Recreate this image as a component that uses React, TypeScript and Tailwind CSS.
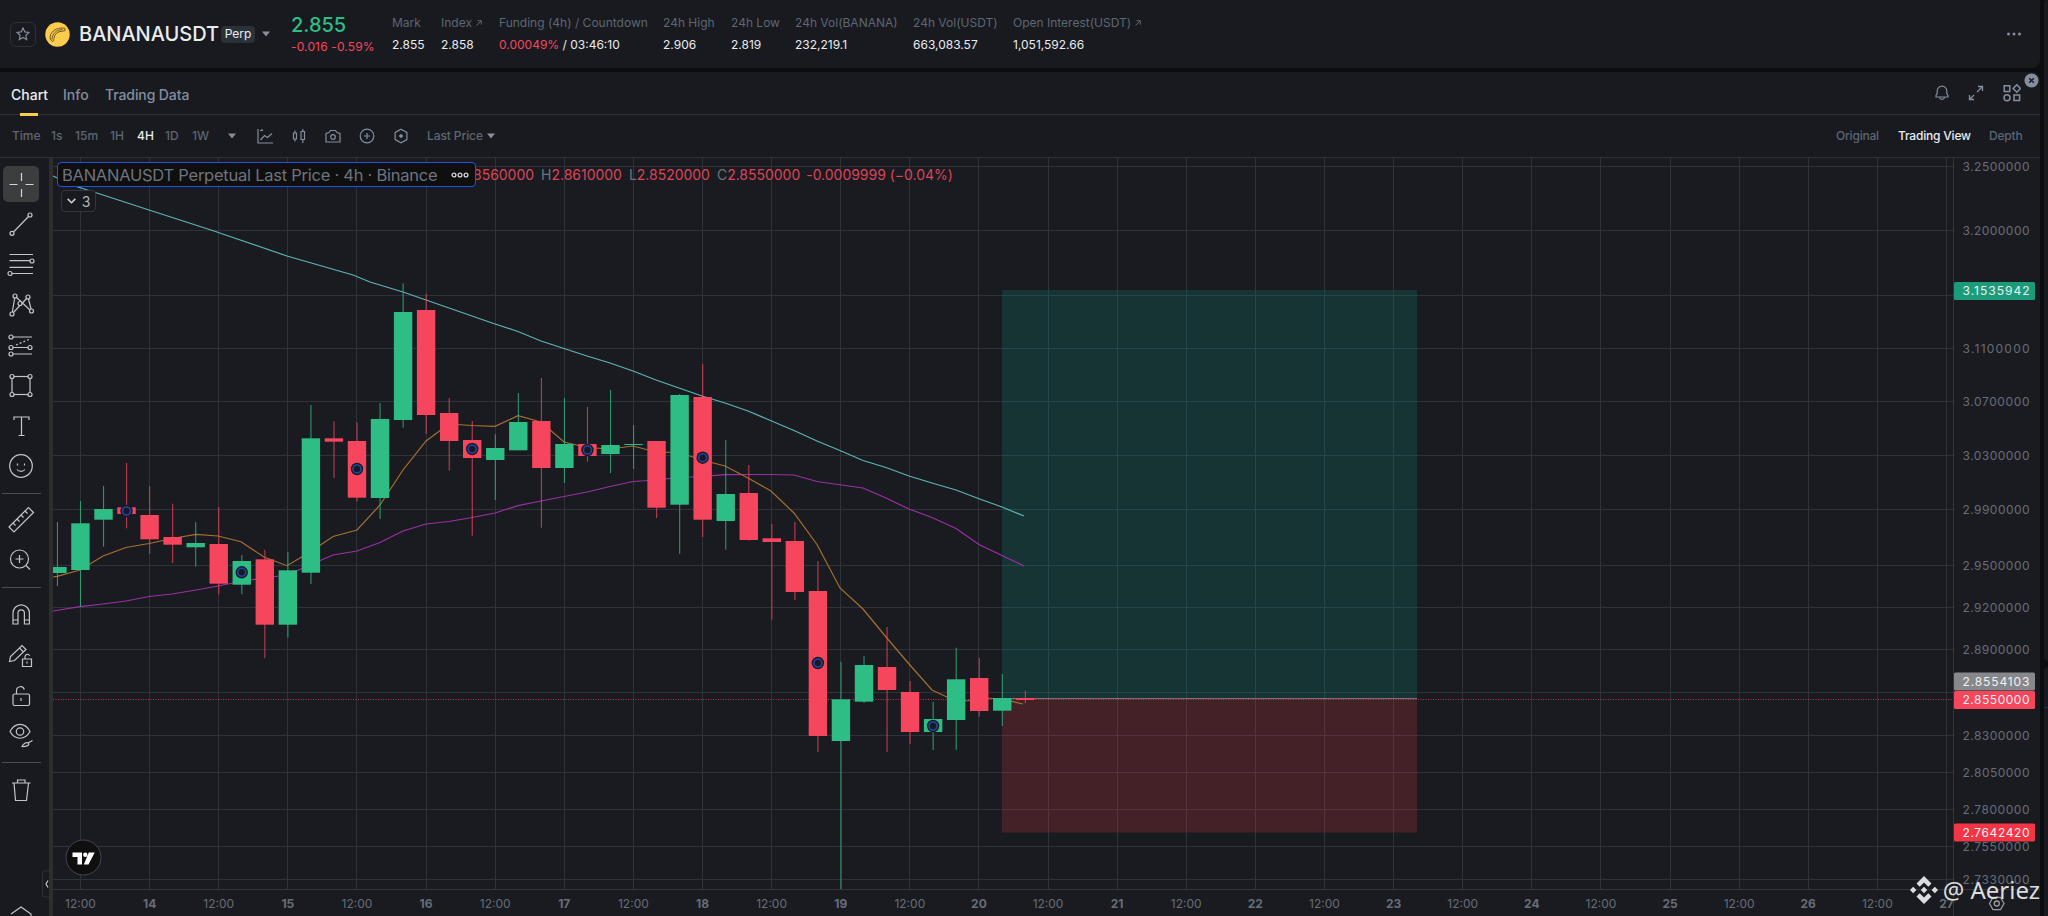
import clsx from "clsx";

type Candle = [number, number, number, number, 0 | 1];

// high, low, body top, body bottom, 1 = up
const candles: Candle[] = [
  [522, 586, 567, 573, 1],
  [501, 607, 523.3, 570, 1],
  [486, 546.7, 509, 519.7, 1],
  [463, 528.3, 507.3, 514, 0],
  [486, 553.7, 515, 539.3, 0],
  [503.7, 563, 537, 544.7, 0],
  [522, 566.7, 543, 547.3, 1],
  [507, 594.3, 544, 583.7, 0],
  [555, 594, 561, 584.7, 1],
  [550, 658, 559.3, 624.7, 0],
  [552, 637.7, 570.3, 624.7, 1],
  [405, 584, 438.3, 572.7, 1],
  [421.3, 478, 438.3, 441.7, 0],
  [422.3, 501.3, 441, 497.7, 0],
  [403.3, 519, 419, 498, 1],
  [283.3, 427.7, 312, 420, 1],
  [293.7, 434, 310, 415, 0],
  [398, 470.7, 413, 441, 0],
  [421, 535.7, 440, 458, 0],
  [434.3, 500, 448, 460, 1],
  [393, 450.3, 422, 450.3, 1],
  [378, 527.7, 421, 468, 0],
  [398, 483, 444, 468, 1],
  [407, 461.7, 444, 456, 0],
  [390, 473, 445, 454, 1],
  [425, 469, 444, 445, 1],
  [441, 518, 441, 507.7, 0],
  [394, 553.7, 395, 504.7, 1],
  [364, 537, 397, 519.7, 0],
  [440, 549.7, 494, 521, 1],
  [465, 540.7, 493, 540, 0],
  [524, 619.7, 538.3, 542, 0],
  [522, 600, 541, 592, 0],
  [561, 752, 591, 736, 0],
  [661.7, 889, 699.3, 741, 1],
  [656, 703, 665, 701.7, 1],
  [627, 752, 667, 690, 0],
  [681, 744, 692, 732, 0],
  [702, 750, 719, 732, 1],
  [647.7, 750, 679.3, 720, 1],
  [658, 716.7, 678, 711, 0],
  [674, 726, 698, 710.7, 1],
  [690.7, 703.3, 698, 700, 0],
];

// [candle index, y]
const markers = [
  [3, 511],
  [8, 572.3],
  [13, 469],
  [18, 449],
  [23, 450],
  [28, 457.7],
  [33, 663],
  [38, 726],
];

const maSlow =
  "53,176 78,187 103,195 149,210 211,230 287,256 353,275 370,282 403,292 426,300 472,316 495,324 518,331.5 541,341 564,348.5 587,356 610,363 633,371 656,380 679,388 702,396 725,403 748,411 771,420.7 794,430.5 817,441 840,450.5 863,460.5 886,467.5 909,476 932,483 956,490 979,498.7 1002,507 1024,516";
const maFast =
  "53,577 57,576.3 80,570 103,556 126,547.5 149,543.5 172,538.5 196,534.3 218,536 241,541.7 264,557 287,565.7 310,552 333,536.5 357,530 380,505 403,470 426,441 449,424 472,425.5 495,426.3 518,415.7 541,422 564,442 587,447.5 610,449 633,446 656,452 679,452.5 702,460 725,466 748,478 771,491 794,513 817,544.5 840,588 863,609 886,637 909,664 932,690 947,697 967,701 984,698 1002,699 1023,704";
const maMid =
  "53,611 80,606.7 103,604 126,601 149,596.5 172,594 196,590 218,586 241,581.5 264,578 287,575 310,565 333,555 357,551 380,542.5 403,531 426,524 449,521.5 472,517.5 495,513 518,505.7 541,501 564,496.5 587,492 610,486.5 633,481.5 656,480 679,477.5 702,476.5 725,474.7 748,474.5 771,474.5 794,475 817,481.5 863,488 886,498 909,509 932,517.5 956,528.5 979,544.5 1024,566";

const priceLevels: [number, string][] = [
  [166.5, "3.2500000"],
  [230.5, "3.2000000"],
  [295.5, ""],
  [348.5, "3.1100000"],
  [401.5, "3.0700000"],
  [455.5, "3.0300000"],
  [509.5, "2.9900000"],
  [565.5, "2.9500000"],
  [607.5, "2.9200000"],
  [649.5, "2.8900000"],
  [692.5, ""],
  [735.5, "2.8300000"],
  [772.5, "2.8050000"],
  [809.5, "2.7800000"],
  [846.5, "2.7550000"],
  [879.5, "2.7330000"],
];

const priceTags = [
  { y: 291, text: "3.1535942", fill: "#1a9c7b" },
  { y: 681.5, text: "2.8554103", fill: "#87888b" },
  { y: 700, text: "2.8550000", fill: "#f6465d" },
  { y: 832.5, text: "2.7642420", fill: "#f23645" },
];

const stats = [
  { label: "Mark", value: "2.855", width: "w-[49px]" },
  { label: "Index", value: "2.858", width: "w-[58px]", arrow: true },
  { label: "Funding (4h) / Countdown", value: "03:46:10", rate: "0.00049%", width: "w-[164px]" },
  { label: "24h High", value: "2.906", width: "w-[68px]" },
  { label: "24h Low", value: "2.819", width: "w-[64px]" },
  { label: "24h Vol(BANANA)", value: "232,219.1", width: "w-[118px]" },
  { label: "24h Vol(USDT)", value: "663,083.57", width: "w-[100px]" },
  { label: "Open Interest(USDT)", value: "1,051,592.66", width: "w-[140px]", arrow: true },
];

const candleX = (i: number) => 57.4 + i * 23.045;

const Caret = ({ className }: { className?: string }) => (
  <svg className={className} width="8" height="6" viewBox="0 0 8 6" fill="#848e9c">
    <path d="M0 0.5h8L4 5.5z" />
  </svg>
);

const OutArrow = () => (
  <svg width="6" height="6" viewBox="0 0 6 6" fill="none" stroke="#5e6673">
    <path d="M0.5 5.5L5 1M1.5 0.7H5.3V4.5" />
  </svg>
);

const SymbolHeader = () => (
  <header className="flex h-[68px] shrink-0 items-center rounded-br-lg bg-[#181a20] pl-[10px] pr-[18px]">
    <div className="flex h-[25px] w-[26px] shrink-0 items-center justify-center rounded-md border border-[#2b3139]">
      <svg width="14" height="14" viewBox="0 0 14 14" fill="none" stroke="#848e9c" strokeWidth="1.2">
        <path d="M7 1l1.8 3.9 4.2.5-3.1 2.9.8 4.2L7 10.4l-3.7 2.1.8-4.2L1 5.4l4.2-.5z" />
      </svg>
    </div>
    <svg className="ml-[9px] shrink-0" width="25" height="25" viewBox="0 0 25 25">
      <circle cx="12.5" cy="12.5" r="12.2" fill="#fccd4d" />
      <path
        d="M20 6.3c-6-1.2-12 1.2-14.5 6.400-1 3 0 6 2.300 6.800 1.200-.4.8-1.600 1-3C9.500 12.500 12 9.800 16 9.300l4-.6zM7 17.500C7 12 11 7.700 17.500 7.600"
        fill="none"
        stroke="#6b5420"
        strokeWidth="1"
      />
    </svg>
    <h1 className="ml-[9px] w-[142px] shrink-0 text-[20px] font-medium text-[#eaecef]">BANANAUSDT</h1>
    <span className="flex h-[17px] w-[34px] shrink-0 items-center justify-center rounded-sm bg-[#2b3139] text-[12px] text-[#eaecef]">
      Perp
    </span>
    <Caret className="ml-[7px] shrink-0" />
    <div className="ml-[21px] w-[101px] shrink-0">
      <div className="text-[20px] font-medium leading-[25px] text-[#2ebd85]">2.855</div>
      <div className="whitespace-nowrap text-[12px] leading-[17px] tracking-[0.15px] text-[#f6465d]">-0.016 -0.59%</div>
    </div>
    {stats.map((item) => (
      <div key={item.label} className={clsx("shrink-0 whitespace-nowrap text-[12px]", item.width)}>
        <div className="flex items-center gap-1 leading-[22px] text-[#5e6673]">
          {item.label}
          {item.arrow && <OutArrow />}
        </div>
        <div className="leading-[22px] text-[#eaecef]">
          {item.rate && <span className="text-[#f6465d]">{item.rate} </span>}
          {item.rate && "/ "}
          {item.value}
        </div>
      </div>
    ))}
    <svg className="ml-auto" width="16" height="4" viewBox="0 0 16 4" fill="#848e9c">
      <circle cx="2.5" cy="2" r="1.5" />
      <circle cx="8" cy="2" r="1.5" />
      <circle cx="13.5" cy="2" r="1.5" />
    </svg>
  </header>
);

const TabBar = () => (
  <div className="relative flex h-[43px] shrink-0 items-center border-b border-[#2b3139] pl-[11px] pr-[19px] text-[14px] font-medium text-[#848e9c]">
    <span className="relative w-[52px] pt-[3px] text-[#eaecef]">
      Chart
      <i className="absolute -bottom-[11px] left-[9px] h-[3px] w-[18px] bg-[#fccd4d]" />
    </span>
    <span className="w-[42px] pt-[3px]">Info</span>
    <span className="pt-[3px] tracking-[-0.1px]">Trading Data</span>
    <div className="ml-auto flex items-center">
      <svg width="16" height="16" viewBox="0 0 16 16" fill="none" stroke="#848e9c" strokeWidth="1.2">
        <path d="M2 12V10.5L3.2 8.5V6a4.8 4.8 0 019.6 0v2.5L14 10.5V12zM5.500 12.500c.5 2.500 4.500 2.500 5 0" />
      </svg>
      <svg className="ml-[18px]" width="16" height="16" viewBox="0 0 16 16" fill="none" stroke="#848e9c" strokeWidth="1.3">
        <path d="M10 1.5h4.5V6M14 2L9 7M1.5 10v4.500H6M2 14l4-4" />
      </svg>
      <svg className="ml-[19px]" width="18" height="18" viewBox="0 0 18 18" fill="none" stroke="#848e9c" strokeWidth="1.5">
        <path d="M1.2 1.8h5.6v5.6H1.2zM11 11h5.6v5.6H11zM13.8 0.8l3.7 3.7-3.7 3.7-3.7-3.7z" />
        <circle cx="4" cy="13.8" r="3" />
      </svg>
    </div>
    <svg className="absolute right-[1px] top-[1px]" width="15" height="15" viewBox="0 0 15 15">
      <circle cx="7.5" cy="7.5" r="7" fill="#848e9c" />
      <path d="M5.2 5.2l4.6 4.6M9.8 5.2L5.2 9.8" stroke="#181a20" strokeWidth="1.4" />
    </svg>
  </div>
);

const IntervalBar = () => (
  <div className="flex h-[43px] shrink-0 items-center border-b border-[#2b3139] pb-px pl-[12px] pr-[15px] text-[12px] font-medium text-[#5e6673]">
    <span className="w-[39px]">Time</span>
    <span className="w-[24px]">1s</span>
    <span className="w-[35px]">15m</span>
    <span className="w-[27px]">1H</span>
    <span className="w-[28px] text-[#eaecef]">4H</span>
    <span className="w-[27px]">1D</span>
    <span className="w-[36px]">1W</span>
    <Caret />
    <div className="ml-[21px] flex items-center gap-[18px]">
      <svg width="16" height="16" viewBox="0 0 16 16" fill="none" stroke="#848e9c" strokeWidth="1.2">
        <path d="M1 1v14h15M3.5 12l4-4.500 3 2L15 5.500M3 2.500h2.500M4.500 1.500l1.500 1" />
      </svg>
      <svg width="16" height="16" viewBox="0 0 16 16" fill="none" stroke="#848e9c" strokeWidth="1.2">
        <path d="M2.5 5h3v6h-3zM10 3.500h3.500v8H10zM4 2.500V5M4 11v2.500M11.800 1v2.500M11.800 11.500V15" />
      </svg>
      <svg width="16" height="16" viewBox="0 0 16 16" fill="none" stroke="#848e9c" strokeWidth="1.2">
        <path d="M1 14V5.500l3-1L5.500 2.500h5L12 4.500l3 1V14z" />
        <circle cx="8" cy="9" r="2.3" />
      </svg>
      <svg width="16" height="16" viewBox="0 0 16 16" fill="none" stroke="#848e9c" strokeWidth="1.2">
        <circle cx="8" cy="8" r="6.8" />
        <path d="M8 5v6M5 8h6" />
      </svg>
      <svg width="16" height="16" viewBox="0 0 16 16" fill="none" stroke="#848e9c" strokeWidth="1.2">
        <path d="M8 1.2l5.900 3.200v7.200L8 14.800l-5.900-3.200V4.400z" />
        <path d="M8 5.700L10.300 8 8 10.300 5.700 8z" fill="#848e9c" stroke="none" />
      </svg>
    </div>
    <span className="ml-[18px] mr-[4px] tracking-[-0.1px]">Last Price</span>
    <Caret />
    <div className="ml-auto flex whitespace-nowrap tracking-[-0.2px]">
      <span className="w-[62px]">Original</span>
      <span className="w-[91px] text-[#eaecef]">Trading View</span>
      <span className="w-[36px]">Depth</span>
    </div>
  </div>
);

const node = (cx: number, cy: number) => <circle key={`${cx}-${cy}`} cx={cx} cy={cy} r="2" fill="#181a20" />;

// whole tool strip as one drawing, in page units
const DrawingTools = () => (
  <aside className="flex w-[49px] shrink-0 bg-[#181a20]">
    <svg width="49" height="758" viewBox="0 158 49 758" fill="none" stroke="#c3c5c9" strokeWidth="1.2">
      <rect x="3" y="166" width="36" height="36" rx="5" fill="#3c3d3f" stroke="none" />
      <path d="M21.5 173v8M21.5 189v8M9.500 184.500h8M25.500 184.500h8" stroke="#d1d4dc" />

      <path d="M13 232.5L29 216" />
      {node(12, 233.3)}
      {node(30, 215)}

      <path d="M9.5 254.500h23.500M9.500 260.700h20.500M9.500 267.300h23.500M12 273.500h21" />
      {node(32, 261)}
      {node(10, 273.5)}

      <path d="M12 314L15 296M15 296L31 311M28 297L12 314M28 297L31.5 311" />
      {node(12, 314)}
      {node(15, 296)}
      {node(20, 303.5)}
      {node(28, 297)}
      {node(31.5, 311)}

      <path d="M13 337h19M13 347.500h17M13 354h19" />
      <path d="M16 345l14-6" strokeDasharray="2 2" />
      {node(11, 337)}
      {node(11, 347.5)}
      {node(11, 354)}
      {node(30, 347.5)}

      <rect x="12" y="376.5" width="18" height="18" />
      {node(12, 376.5)}
      {node(30, 376.5)}
      {node(12, 394.5)}
      {node(30, 394.5)}

      <path d="M14 420v-3h15v3M21.500 417v18M18.500 435.500h6" />
      <circle cx="21" cy="466" r="11.3" />
      <path d="M17.5 463.500v2M24.500 463.500v2M17 469.500c2 2.500 6 2.500 8 0" />
      <path d="M2 493.500h39" stroke="#4a4d55" />

      <path d="M9 527l19.500-19.500 5 5L14 532zM13 523l2.500 2.500M17 519l2.500 2.500M21 515l2.500 2.500M25 511l2.500 2.500" />
      <circle cx="19.5" cy="559" r="9" />
      <path d="M26 565.500l4 4M15.500 559h8M19.500 555v8" />
      <path d="M2 587.500h39" stroke="#4a4d55" />

      <path d="M13 624v-11a8.200 8.200 0 0116.400 0v11h-5v-11a3.200 3.200 0 00-6.400 0v11zM13 620h5M24.400 620h5" />
      <path d="M9.5 661.500l1-5L22 645.500l4 4L14.500 660.500zM19.500 648l4 4" />
      <path d="M22.5 659h9v7.500h-9zM25 659v-2.500a2.400 2.400 0 014.600-.8M27 661.500v2" />
      <rect x="13" y="694" width="16.5" height="11.5" rx="1.5" />
      <path d="M16.5 694v-3.500a4 4 0 017.800-1M21 698v3" />
      <path d="M10 731.500c5-9.500 15-9.500 20 0-5 9-15 9-20 0z" />
      <circle cx="20" cy="731.5" r="3.7" />
      <path d="M22 746.500c1.500-3 4-4.500 6-3.500s.5 4-6 3.500zM28 743l4.500-2.500" />
      <path d="M2 762.500h39" stroke="#4a4d55" />

      <path d="M12 783h18.500M14 783l1.500 17.500h11L28.500 783M17.500 783v-3h7.500v3" />
      <path d="M11 914l10-7 10 7v4" />
      <path d="M50 871h-4.500a3 3 0 00-3 3v20a3 3 0 003 3H50z" fill="#181a20" stroke="#2b3139" />
      <path d="M48 880.500l-2 3.500 2 3.500" />
    </svg>
  </aside>
);

const PriceChart = () => {
  const gridX = Array.from({ length: 28 }, (_, k) => 80.5 + k * 69.11);

  return (
    <svg
      className="block shrink-0"
      width="1987"
      height="758"
      viewBox="53 158 1987 758"
      fontFamily="Inter, sans-serif"
      fontSize="12"
    >
      <g stroke="#2e323b">
        {gridX.map((x) => (
          <path key={x} d={`M${Math.floor(x) + 0.5} 158V889`} />
        ))}
        {priceLevels.map(([y]) => (
          <path key={y} d={`M53 ${y}H1953`} />
        ))}
        <path d="M53 889.500H2040M1953.500 158V916" stroke="#33363e" />
      </g>

      {/* long position: target and stop zones */}
      <rect x="1002" y="290" width="415" height="409" fill="#089981" fillOpacity="0.2" />
      <rect x="1002" y="699" width="415" height="133.5" fill="#f23645" fillOpacity="0.2" />
      <path d="M1002 698.500H1417" stroke="#87888b" opacity="0.8" />
      <path d="M53 699.500H1953" stroke="#f6465d" strokeDasharray="1 1.500" opacity="0.7" />

      <g fill="none" strokeWidth="1.2">
        <polyline points={maMid} stroke="#9c2fa8" />
        <polyline points={maFast} stroke="#a5702f" />
        <polyline points={maSlow} stroke="#5bb5b2" />
      </g>

      {candles.map(([high, low, top, bottom, up], i) => {
        const x = candleX(i);
        const color = up ? "#2ebd85" : "#f6465d";
        return (
          <g key={i}>
            <rect x={x - 0.5} y={high} width="1.1" height={low - high} fill={color} opacity="0.75" />
            <rect x={x - 9.2} y={top} width="18.4" height={bottom - top} fill={color} />
          </g>
        );
      })}

      {markers.map(([i, y]) => (
        <g key={i}>
          <circle cx={candleX(i)} cy={y} r="6.2" fill="#181a20" />
          <circle cx={candleX(i)} cy={y} r="4" fill="none" stroke="#2045a8" strokeWidth="1.6" />
        </g>
      ))}

      <g fill="#666d79">
        {priceLevels.map(([y, text]) => (
          <text key={y} x="1962.500" y={y + 4} textLength="67">
            {text}
          </text>
        ))}
        {gridX.map((x, k) => (
          <text key={x} x={x} y="908" textAnchor="middle" fontWeight={k % 2 ? 700 : 400}>
            {k % 2 ? 14 + (k - 1) / 2 : "12:00"}
          </text>
        ))}
      </g>
      {priceTags.map((tag) => (
        <g key={tag.text}>
          <rect x="1954" y={tag.y - 9} width="81" height="18" rx="1.5" fill={tag.fill} />
          <text x="1962.5" y={tag.y + 4} textLength="67" fill="#f0f0f2">
            {tag.text}
          </text>
        </g>
      ))}

      <circle cx="83.5" cy="857.5" r="17.5" fill="#0f0f0f" stroke="#434651" />
      <path d="M72.5 852.500h9.500v12h-4.500v-7.500h-5zM88.500 864.500h-4.700l5-12h5.900z" fill="#fff" />
      <circle cx="85.3" cy="854.8" r="2.2" fill="#fff" />

      <g fill="none" stroke="#9a9da3" strokeWidth="1.3">
        <path d="M1989.5 903.500l3.500-6.200h7.500l3.500 6.200-3.500 6.200h-7.500z" />
        <circle cx="1996.8" cy="903.5" r="2.5" />
      </g>
    </svg>
  );
};

const ChartLegend = () => (
  <div className="absolute left-[4px] top-[4px]">
    <div className="flex items-center">
      <div className="relative z-10 flex h-[25px] w-[419px] shrink-0 items-center rounded border border-[#1e53e5] bg-[#0f0f0f] pl-[4px] pt-px text-[16.5px] tracking-[-0.25px] text-[#6d7480]">
        <span className="w-[384px] whitespace-nowrap">BANANAUSDT Perpetual Last Price · 4h · Binance</span>
        <svg className="mb-px ml-[5px]" width="18" height="6" viewBox="0 0 18 6" fill="none" stroke="#d1d4dc" strokeWidth="1.3">
          <circle cx="3" cy="3" r="1.9" />
          <circle cx="9" cy="3" r="1.9" />
          <circle cx="15" cy="3" r="1.9" />
        </svg>
      </div>
      <div className="-ml-[3px] flex gap-[7px] whitespace-nowrap text-[14px] tracking-[-0.02px] text-[#dc4458]">
        <span>8560000</span>
        <span>
          <b className="font-normal text-[#6d7480]">H</b>2.8610000
        </span>
        <span>
          <b className="font-normal text-[#6d7480]">L</b>2.8520000
        </span>
        <span>
          <b className="font-normal text-[#6d7480]">C</b>2.8550000
        </span>
        <span className="-ml-px">-0.0009999 (−0.04%)</span>
      </div>
    </div>
    <div className="ml-[4px] mt-[3px] flex h-[22px] w-[35px] items-center justify-center gap-[6px] rounded border border-[#33363d] bg-[#181a20] text-[14px] text-[#b2b5be]">
      <svg width="9" height="6" viewBox="0 0 9 6" fill="none" stroke="#d1d4dc" strokeWidth="1.5">
        <path d="M0.7 0.9l3.8 3.8 3.8-3.8" />
      </svg>
      3
    </div>
  </div>
);

const Watermark = () => (
  <div className="absolute bottom-[9px] right-0 flex items-center gap-[5px] text-[24px] leading-[34px] text-[#dcdddf]">
    <svg width="28" height="28" viewBox="0 0 28 28" fill="currentColor">
      <path d="M14 0l7.500 7.500-3.200 3.200L14 6.400l-4.300 4.300-3.200-3.200zM14 28l-7.500-7.500 3.200-3.200 4.300 4.300 4.300-4.300 3.200 3.200zM3.200 10.800L6.400 14l-3.200 3.200L0 14zM24.800 10.800L28 14l-3.200 3.200-3.200-3.200zM14 10.800l3.200 3.200-3.200 3.200-3.200-3.200z" />
    </svg>
    <span className="whitespace-nowrap font-['Noto_Sans',sans-serif]">@ Aeriez</span>
  </div>
);

export default function App() {
  return (
    <div className="flex h-[916px] w-[2048px] gap-1 overflow-hidden bg-[#0b0e11] font-['Inter',sans-serif]">
      <div className="flex w-[2040px] shrink-0 flex-col gap-1">
        <SymbolHeader />
        <main className="flex h-[844px] flex-col rounded-tr-lg bg-[#181a20]">
          <TabBar />
          <IntervalBar />
          <div className="flex min-h-0 flex-1 bg-[#1a1b20]">
            <DrawingTools />
            <div className="w-[4px] shrink-0 bg-[#2e2e2e]" />
            <div className="relative">
              <PriceChart />
              <ChartLegend />
              <Watermark />
            </div>
          </div>
        </main>
      </div>
      <div className="flex flex-1 flex-col gap-[6px]">
        <div className="h-[661px] rounded-l-lg bg-[#181a20]" />
        <div className="flex-1 rounded-tl-lg bg-[#181a20] pt-[40px]">
          <div className="border-t border-[#2b3139]" />
        </div>
      </div>
    </div>
  );
}
